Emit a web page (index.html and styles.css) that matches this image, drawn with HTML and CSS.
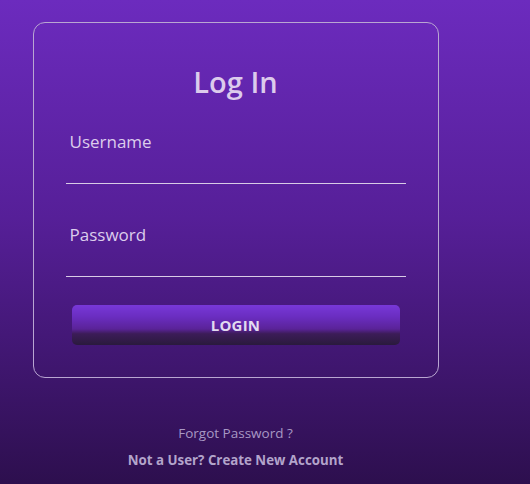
FILE: index.html
```html
<!DOCTYPE html>
<html lang="en">
<head>
<meta charset="utf-8">
<title>Log In</title>
<link rel="stylesheet" href="styles.css">
</head>
<body>
<div class="page">
  <form class="card">
    <h1 class="title">Log In</h1>
    <div class="field">
      <label class="label">Username</label>
    </div>
    <div class="field field-gap">
      <label class="label">Password</label>
    </div>
    <button type="button" class="btn">LOGIN</button>
  </form>
  <a class="forgot">Forgot Password ?</a>
  <a class="signup">Not a User? Create New Account</a>
</div>
</body>
</html>
```
FILE: styles.css
```css
html, body {
  margin: 0;
  padding: 0;
  height: 100%;
}
body {
  background: linear-gradient(180deg, #6c2bbe 0%, #561f98 45%, #2d0f4e 100%);
  font-family: "Open Sans", "Noto Sans", sans-serif;
  overflow: hidden;
}
.page {
  width: 471px;
  display: flex;
  flex-direction: column;
  align-items: center;
  padding-top: 22px;
}
.card {
  box-sizing: border-box;
  width: 406px;
  border: 1px solid #b9a6d2;
  border-radius: 12px;
  padding: 39px 32px 32px;
  display: flex;
  flex-direction: column;
}
.title {
  margin: 0;
  text-align: center;
  font-size: 29px;
  line-height: 40px;
  font-weight: 600;
  color: #dccbec;
}
.field {
  margin-top: 28px;
  padding: 0 0 29px 4px;
  border-bottom: 1px solid #d8cbe6;
}
.field-gap {
  margin-top: 39px;
}
.label {
  display: block;
  font-size: 17px;
  line-height: 24px;
  color: #dccdec;
}
.btn {
  margin: 28px 6px 0;
  height: 40px;
  border: none;
  border-radius: 5px;
  background: linear-gradient(180deg, #7838d8 0%, #6a2dc0 30%, #5a2398 60%, #3c1c58 72%, #2a1a3c 100%);
  color: #e2daf0;
  font-family: "Open Sans", "Noto Sans", sans-serif;
  font-size: 15px;
  font-weight: 700;
  letter-spacing: 0.2px;
  padding: 0;
}
.forgot {
  margin-top: 46px;
  font-size: 13.5px;
  line-height: 18px;
  color: #a898c4;
}
.signup {
  margin-top: 9px;
  font-size: 13.3px;
  line-height: 18px;
  font-weight: 700;
  color: #b3a4cb;
}
```
